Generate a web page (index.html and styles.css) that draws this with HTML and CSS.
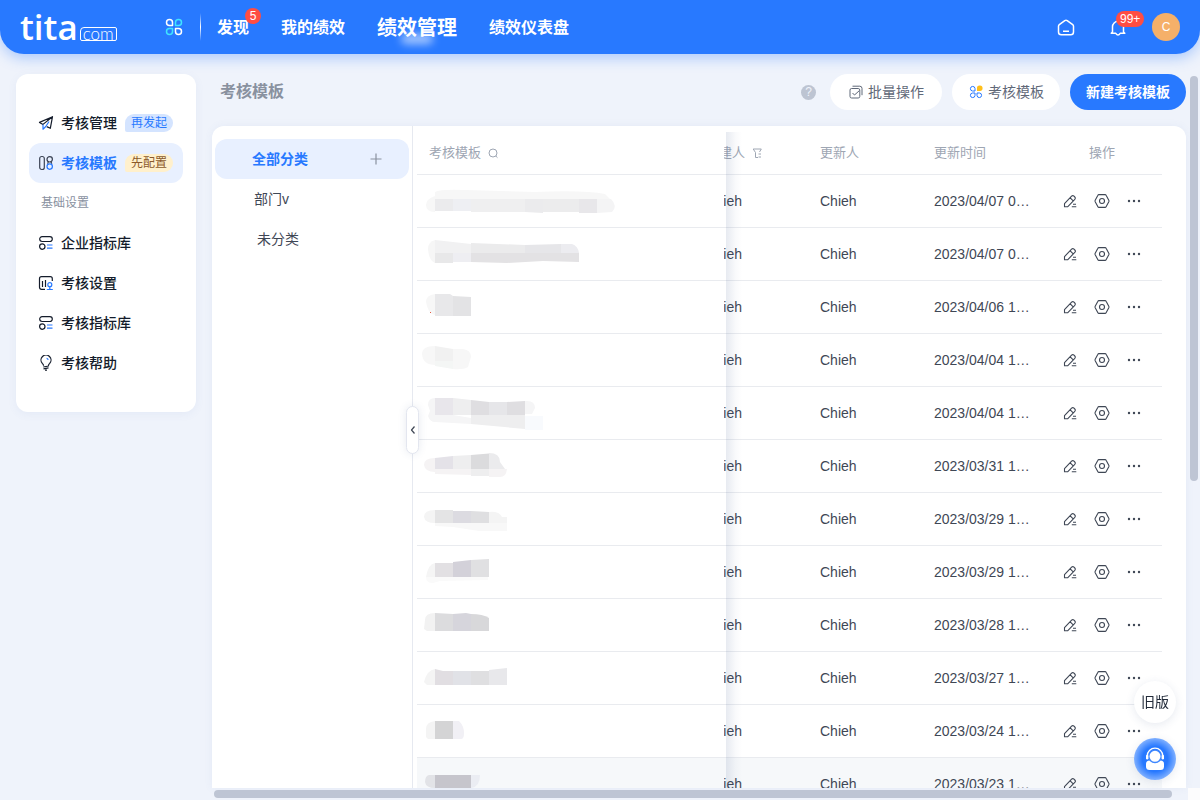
FILE: index.html
```html
<!DOCTYPE html>
<html lang="zh-CN">
<head>
<meta charset="utf-8">
<title>考核模板</title>
<link rel="stylesheet" href="styles.css">
</head>
<body>
<svg class="sprite" aria-hidden="true">
  <symbol id="edit" viewBox="0 0 16 16"><path d="M2.500 13.800v-3.200L9.600 3.200a1.700 1.700 0 0 1 2.400 0l.8.8a1.700 1.700 0 0 1 0 2.400L5.600 13.800zM8.200 4.800l3 3M9.800 13.800h4.500M11 11.200h3"/></symbol>
  <symbol id="view" viewBox="0 0 16 16"><path d="M4.900 1.600h6.200q.7 0 1 .6l2.700 5q.4.800 0 1.600l-2.700 5q-.3.600-1 .6H4.900q-.7 0-1-.6l-2.700-5q-.4-.8 0-1.600l2.700-5q.3-.6 1-.6z"/><circle cx="8" cy="8" r="2.500"/></symbol>
  <symbol id="more" viewBox="0 0 16 16"><g class="dots"><circle cx="3" cy="8" r="1.200"/><circle cx="8" cy="8" r="1.200"/><circle cx="13" cy="8" r="1.200"/></g></symbol>
  <symbol id="library" viewBox="0 0 16 16"><rect x="1.700" y="1.700" width="12.600" height="4.800" rx="2.400"/><circle cx="4.300" cy="11.600" r="2.700"/><path class="blue" d="M9 10h5.500M9 13.200h5.500"/></symbol>
</svg>

<header class="header">
  <a class="logo" href="#"><span class="logo-name">tita</span><span class="logo-com">com</span></a>
  <button class="icon-button apps" aria-label="应用">
    <svg viewBox="0 0 18 18"><path d="M7.500 7.500H4.500A3 3 0 1 1 7.500 4.500zM10.500 10.500h3a3 3 0 1 1-3 3z"/><path class="cyan" d="M10.500 7.500V4.500A3 3 0 1 1 13.500 7.500zM7.500 10.500v3A3 3 0 1 1 4.500 10.500z"/></svg>
  </button>
  <span class="divider"></span>
  <nav class="nav">
    <a href="#">发现<span class="badge">5</span></a>
    <a href="#">我的绩效</a>
    <a class="current" href="#">绩效管理</a>
    <a href="#">绩效仪表盘</a>
  </nav>
  <div class="account">
    <button class="icon-button" aria-label="首页"><svg viewBox="0 0 18 18"><path d="M1.500 8.200Q1.500 7.300 2.300 6.700L7.800 2.600Q9 1.900 10.200 2.600L15.700 6.700Q16.500 7.300 16.500 8.200V14Q16.500 16.800 13.700 16.800H4.300Q1.500 16.800 1.500 14zM6 13.200h6"/></svg></button>
    <button class="icon-button" aria-label="通知"><svg viewBox="0 0 18 18"><path d="M3.500 14V8.800a5.500 5.500 0 0 1 11 0V14l1.300 1.300H11.200Q9 18.600 6.800 15.300H2.200z"/></svg><span class="badge">99+</span></button>
    <button class="avatar">C</button>
  </div>
</header>

<div class="body">
  <aside class="sidebar">
    <a class="side-item" href="#"><svg viewBox="0 0 16 16"><path d="M14.500 1.700 1.500 7.400l3.500 2zM14.500 1.700l-2.200 11.600-3.600-1.700"/><path class="blue" d="M5 9.400v4.800l2.800-2.700M7.800 11.500 11 6.500"/></svg>考核管理<span class="tag tag-blue">再发起</span></a>
    <a class="side-item active" href="#"><svg viewBox="0 0 16 16"><rect x="1.700" y="1.500" width="4.600" height="13" rx="2"/><circle cx="11.700" cy="4.300" r="2.700"/><path d="M9.600 8.700 10.300 7M13.800 8.700 13.100 7"/><circle class="blue" cx="11.700" cy="11.600" r="2.700"/></svg>考核模板<span class="tag tag-gold">先配置</span></a>
    <h2 class="side-title">基础设置</h2>
    <a class="side-item" href="#"><svg><use href="#library"/></svg>企业指标库</a>
    <a class="side-item" href="#"><svg viewBox="0 0 16 16"><path d="M7 14.300H3.500q-2 0-2-2v-8.600q0-2 2-2h8.800q2 0 2 2V6M4.500 6v6M7.500 5v7"/><path class="blue" d="M8.800 14.500h6M11.800 11.500v3"/><circle class="blue" cx="11.800" cy="9.700" r="2"/></svg>考核设置</a>
    <a class="side-item" href="#"><svg><use href="#library"/></svg>考核指标库</a>
    <a class="side-item" href="#"><svg viewBox="0 0 16 16"><path d="M5.600 10.800Q5.500 9.500 4.300 8.400a5 5 0 1 1 7.400 0Q10.500 9.500 10.400 10.800M5.300 12l5.500-1M5.500 13.800l5-.9M7 15.200h2"/><path class="blue" d="M8.600 3.300q1.300.2 1.600 1.600"/></svg>考核帮助</a>
  </aside>

  <main class="content">
    <div class="toolbar">
      <h1>考核模板</h1>
      <button class="help" aria-label="帮助">?</button>
      <button class="pill"><svg viewBox="0 0 16 16"><path d="M4.500 2.200h7.300q2.200 0 2.200 2.200v6.800M3.600 4.500h6.600q1.600 0 1.600 1.600v6.300q0 1.600-1.600 1.600H3.600Q2 14 2 12.400V6.100q0-1.600 1.600-1.600zM4.500 9l2 2 5-4.500"/></svg>批量操作</button>
      <button class="pill"><svg viewBox="0 0 16 16"><path class="blue" d="M7 7H4.500A2.300 2.300 0 1 1 7 4.500zM9 9h2.500A2.300 2.300 0 1 1 9 11.500zM7 9v2.500A2.300 2.300 0 1 1 4.500 9z"/><path class="gold" d="M9 7V4.500A2.800 2.800 0 1 1 11.500 7z"/></svg>考核模板</button>
      <button class="pill primary">新建考核模板</button>
    </div>

    <section class="panel">
      <div class="categories">
        <div class="category selected"><span>全部分类</span><button class="add" aria-label="新增分类"><svg viewBox="0 0 16 16"><path d="M8 2.500v11M2.500 8h11"/></svg></button></div>
        <div class="category">部门v</div>
        <div class="category nested">未分类</div>
        <button class="collapse" aria-label="收起"><svg viewBox="0 0 8 10"><path d="M5.500 1.500 2.500 5l3 3.500"/></svg></button>
      </div>
      <div class="table-wrap">
        <table>
          <thead>
            <tr>
              <th class="name"><span class="head">考核模板<svg viewBox="0 0 12 12"><circle cx="6" cy="6" r="4"/><path d="m8.800 9 1.700 1.700"/></svg></span></th>
              <th class="creator"><span class="head clip">创建人<svg viewBox="0 0 12 12"><path d="M8.500 5 10.300 2H2.200L4.500 5.500v5h2.500M7.500 7h2.500M7.500 10h2.500"/></svg></span></th>
              <th class="updater">更新人</th>
              <th class="time">更新时间</th>
              <th class="ops">操作</th>
            </tr>
          </thead>
          <tbody>
            <tr>
              <td><svg class="mosaic" viewBox="417 175 220 52"><path fill="#f7f7f7" d="M435 192q5-3 30-2l70 2q50-2 70 2l5 5H435zM435 196q-9 3-9 9 0 7 9 7z"/><path fill="#ebebed" d="M435 199h18v12h-18zM525 199h18v14l-18-1z"/><path fill="#eeeff3" d="M453 199h18v12h-18z"/><path fill="#efeff0" d="M471 199h54v13h-54z"/><path fill="#ececed" d="M543 199h36v13h-36z"/><path fill="#e8e7ea" d="M579 199h18v14h-18z"/><path fill="#f4f4f5" d="M597 199h14q7 7 1 13l-15 1z"/></svg></td>
              <td><span class="clip">Chieh</span></td><td>Chieh</td><td>2023/04/07 0…</td>
              <td class="actions"><button aria-label="编辑"><svg><use href="#edit"/></svg></button><button aria-label="查看"><svg><use href="#view"/></svg></button><button aria-label="更多"><svg><use href="#more"/></svg></button></td>
            </tr>
            <tr>
              <td><svg class="mosaic" viewBox="417 228 220 52"><path fill="#f6f6f6" d="M435 240q-7 2-7 9 1 12 7 14z"/><path fill="#f1f1f2" d="M435 240l18 2v11h-18zM453 242l18 2v9h-18z"/><path fill="#ebebec" d="M471 243l54 2v8h-54z"/><path fill="#e6e6e9" d="M525 245l36-1v9h-36z"/><path fill="#ececf0" d="M561 244h11q6 2 7 9h-18z"/><path fill="#e8e8e9" d="M435 253h18v10h-18z"/><path fill="#eeeef2" d="M453 253h18v9h-18z"/><path fill="#e3e2e4" d="M471 253h108v9l-36-1-36 2-36-1z"/></svg></td>
              <td><span class="clip">Chieh</span></td><td>Chieh</td><td>2023/04/07 0…</td>
              <td class="actions"><button aria-label="编辑"><svg><use href="#edit"/></svg></button><button aria-label="查看"><svg><use href="#view"/></svg></button><button aria-label="更多"><svg><use href="#more"/></svg></button></td>
            </tr>
            <tr>
              <td><svg class="mosaic" viewBox="417 281 220 52"><path fill="#f7f7f7" d="M435 294q-9 1-9 8 2 12 9 13z"/><path fill="#e8e8ea" d="M435 294h15l3 2v20h-18z"/><path fill="#e3e3e5" d="M453 296l18 1v19h-18z"/><path fill="#e55b43" d="M430 312h1v1h-1z"/></svg></td>
              <td><span class="clip">Chieh</span></td><td>Chieh</td><td>2023/04/06 1…</td>
              <td class="actions"><button aria-label="编辑"><svg><use href="#edit"/></svg></button><button aria-label="查看"><svg><use href="#view"/></svg></button><button aria-label="更多"><svg><use href="#more"/></svg></button></td>
            </tr>
            <tr>
              <td><svg class="mosaic" viewBox="417 334 220 52"><path fill="#f7f7f7" d="M435 346q-13 0-13 8 1 11 13 11zM453 349h10q8 1 8 8l-3 10q-5 3-15 2z"/><path fill="#f1f1f1" d="M435 346l18 3v12h-18z"/><path fill="#f4f6f5" d="M435 361h18v8l-18-3z"/></svg></td>
              <td><span class="clip">Chieh</span></td><td>Chieh</td><td>2023/04/04 1…</td>
              <td class="actions"><button aria-label="编辑"><svg><use href="#edit"/></svg></button><button aria-label="查看"><svg><use href="#view"/></svg></button><button aria-label="更多"><svg><use href="#more"/></svg></button></td>
            </tr>
            <tr>
              <td><svg class="mosaic" viewBox="417 387 220 52"><path fill="#f5f5f6" d="M435 398q-7 0-7 7l2 6-2 5q2 6 7 6zM525 401q10-1 10 7l-3 6h-7zM435 415h18l18 3v6l-36-2z"/><path fill="#e8e6eb" d="M435 398h18v17h-18z"/><path fill="#eeeeef" d="M453 398l18 2v15h-18zM471 415h54v14l-54-5z"/><path fill="#dfdee1" d="M471 400l18 2v13h-18zM507 402l18-1v14h-18z"/><path fill="#e6e6e9" d="M489 402h18v13h-18z"/><path fill="#f8fafd" d="M525 416h18v14h-18z"/></svg></td>
              <td><span class="clip">Chieh</span></td><td>Chieh</td><td>2023/04/04 1…</td>
              <td class="actions"><button aria-label="编辑"><svg><use href="#edit"/></svg></button><button aria-label="查看"><svg><use href="#view"/></svg></button><button aria-label="更多"><svg><use href="#more"/></svg></button></td>
            </tr>
            <tr>
              <td><svg class="mosaic" viewBox="417 440 220 52"><path fill="#f5f3f4" d="M435 458q-11 0-11 7 1 7 11 7zM435 469h36v6l-36-1zM489 469h18q-1 8-7 8h-11z"/><path fill="#e4e2e8" d="M435 458l18-2v13h-18z"/><path fill="#eeeeef" d="M453 456l18-1v14h-18zM471 469h18v7h-18z"/><path fill="#dbdbdd" d="M471 455l18-1.500V469h-18z"/><path fill="#ebebed" d="M489 453q11 0 11 9l5 7h-16z"/></svg></td>
              <td><span class="clip">Chieh</span></td><td>Chieh</td><td>2023/03/31 1…</td>
              <td class="actions"><button aria-label="编辑"><svg><use href="#edit"/></svg></button><button aria-label="查看"><svg><use href="#view"/></svg></button><button aria-label="更多"><svg><use href="#more"/></svg></button></td>
            </tr>
            <tr>
              <td><svg class="mosaic" viewBox="417 493 220 52"><path fill="#f4f4f4" d="M435 510q-11 0-11 7 1 6 11 6zM489 512q10-1 13 5h5v6h-18z"/><path fill="#e4e4e5" d="M435 510h18v13h-18z"/><path fill="#dcdbe1" d="M453 511h18v12h-18z"/><path fill="#dfdfe1" d="M471 511l18 1v11h-18z"/><path fill="#f8f8f8" d="M435 523h72v8h-28l-26-4-18-1z"/></svg></td>
              <td><span class="clip">Chieh</span></td><td>Chieh</td><td>2023/03/29 1…</td>
              <td class="actions"><button aria-label="编辑"><svg><use href="#edit"/></svg></button><button aria-label="查看"><svg><use href="#view"/></svg></button><button aria-label="更多"><svg><use href="#more"/></svg></button></td>
            </tr>
            <tr>
              <td><svg class="mosaic" viewBox="417 546 220 52"><path fill="#f5f5f5" d="M435 563q-7 1-9 14h9z"/><path fill="#e2e0e3" d="M435 563h18v14h-18z"/><path fill="#d3d1d9" d="M453 562l18-2v17h-18z"/><path fill="#e0e0e2" d="M471 560l18-1v18h-18z"/><path fill="#fafafa" d="M426 577h62v3l-48 1-7 2q-7 0-7-6z"/></svg></td>
              <td><span class="clip">Chieh</span></td><td>Chieh</td><td>2023/03/29 1…</td>
              <td class="actions"><button aria-label="编辑"><svg><use href="#edit"/></svg></button><button aria-label="查看"><svg><use href="#view"/></svg></button><button aria-label="更多"><svg><use href="#more"/></svg></button></td>
            </tr>
            <tr>
              <td><svg class="mosaic" viewBox="417 599 220 52"><path fill="#f2f2f2" d="M435 613q-10 0-10 7l-1 9 3 2h8z"/><path fill="#dcdcde" d="M435 613l18 1v17h-18z"/><path fill="#d6d5dc" d="M453 614l13-1 5 1v17h-18z"/><path fill="#d8d8da" d="M471 614q12 0 18 4v13h-18z"/></svg></td>
              <td><span class="clip">Chieh</span></td><td>Chieh</td><td>2023/03/28 1…</td>
              <td class="actions"><button aria-label="编辑"><svg><use href="#edit"/></svg></button><button aria-label="查看"><svg><use href="#view"/></svg></button><button aria-label="更多"><svg><use href="#more"/></svg></button></td>
            </tr>
            <tr>
              <td><svg class="mosaic" viewBox="417 652 220 52"><path fill="#f4f4f4" d="M435 669q-8 1-11 13l3 3h8z"/><path fill="#e1dee2" d="M435 669l8 2h10v14h-18z"/><path fill="#e1e2e7" d="M453 671h18v14h-18z"/><path fill="#dfdfe1" d="M471 671h18v14h-18z"/><path fill="#e8e8eb" d="M489 670l18-2v17h-18z"/></svg></td>
              <td><span class="clip">Chieh</span></td><td>Chieh</td><td>2023/03/27 1…</td>
              <td class="actions"><button aria-label="编辑"><svg><use href="#edit"/></svg></button><button aria-label="查看"><svg><use href="#view"/></svg></button><button aria-label="更多"><svg><use href="#more"/></svg></button></td>
            </tr>
            <tr>
              <td><svg class="mosaic" viewBox="417 705 220 52"><path fill="#f4f4f4" d="M435 721q-9 1-9 8v8l2 2h7z"/><path fill="#d4d4d5" d="M435 721h18v18h-18z"/><path fill="#f1f0f5" d="M453 721h6q5 5 5 12 0 6-3 6h-8z"/></svg></td>
              <td><span class="clip">Chieh</span></td><td>Chieh</td><td>2023/03/24 1…</td>
              <td class="actions"><button aria-label="编辑"><svg><use href="#edit"/></svg></button><button aria-label="查看"><svg><use href="#view"/></svg></button><button aria-label="更多"><svg><use href="#more"/></svg></button></td>
            </tr>
            <tr class="hover">
              <td><svg class="mosaic" viewBox="417 758 220 52"><path fill="#e2e3e7" d="M435 775h-6q-4 1-4 7 1 6 10 6z"/><path fill="#c6c5cc" d="M435 775h36v14h-20l-16-1z"/><path fill="#ebedf3" d="M471 775h9q0 12-9 13z"/></svg></td>
              <td><span class="clip">Chieh</span></td><td>Chieh</td><td>2023/03/23 1…</td>
              <td class="actions"><button aria-label="编辑"><svg><use href="#edit"/></svg></button><button aria-label="查看"><svg><use href="#view"/></svg></button><button aria-label="更多"><svg><use href="#more"/></svg></button></td>
            </tr>
          </tbody>
        </table>
      </div>
    </section>
    <div class="track-x"><div class="thumb"></div></div>
  </main>
  <div class="track-y"><div class="thumb"></div><div class="corner"></div></div>
</div>

<div class="floating">
  <button class="old">旧版</button>
  <button class="support" aria-label="客服"><svg viewBox="0 0 28 28"><rect x="5" y="15.500" width="18" height="9.500" rx="3.500" fill="#fff"/><circle cx="14" cy="11.300" r="6.200" fill="#fff" stroke="#3d86ff" stroke-width="1.400"/><path d="M6.200 11a7.800 7.800 0 0 1 15.600 0" fill="none" stroke="#fff" stroke-width="1.300"/><rect x="5" y="9.800" width="2.400" height="4.700" rx="1.200" fill="#fff"/><rect x="20.600" y="9.800" width="2.400" height="4.700" rx="1.200" fill="#fff"/></svg></button>
</div>
</body>
</html>
```
FILE: styles.css
```css
* { box-sizing: border-box; }
body {
  margin: 0;
  height: 100vh;
  display: flex;
  flex-direction: column;
  overflow: hidden;
  background: #eff3fb;
  color: #3f4755;
  font: 14px/20px "Liberation Sans", "Noto Sans CJK SC", sans-serif;
}
button {
  border: 0;
  padding: 0;
  background: none;
  color: inherit;
  font: inherit;
}
a { color: inherit; text-decoration: none; }
h1, h2 { margin: 0; }
svg {
  display: block;
  flex: none;
  width: 16px;
  height: 16px;
  fill: none;
  stroke: currentColor;
  stroke-width: 1.2;
  stroke-linejoin: round;
}
.sprite { position: absolute; width: 0; height: 0; }
.blue { stroke: #2879ff; }
.cyan { stroke: #3fe4ff; }
.gold { fill: #ffbf1a; stroke: none; }
.dots { fill: currentColor; stroke: none; }

.header {
  flex: none;
  height: 54px;
  display: flex;
  align-items: center;
  padding: 0 20px;
  border-radius: 0 0 24px 24px;
  background: #2879ff;
  box-shadow: 0 4px 14px rgba(40, 121, 255, .35);
  color: #fff;
}
.logo { display: flex; align-items: baseline; gap: 2px; width: 97px; }
.logo-name { font: 600 35px/40px "Open Sans", sans-serif; }
.logo-com {
  padding: 0 2px;
  border: 1px solid #fff;
  border-radius: 4px 2px 2px 2px;
  font: 300 17px/12px Lato, sans-serif;
}
.icon-button { position: relative; }
.icon-button svg { width: 18px; height: 18px; stroke-width: 1.5; }
.apps { margin-left: 48px; }
.divider {
  width: 1px;
  height: 28px;
  margin: 0 16px 0 17px;
  background: linear-gradient(transparent, #fff, transparent);
}
.nav { display: flex; align-items: center; gap: 32px; padding-top: 2px; font-size: 16px; line-height: 24px; font-weight: 700; }
.nav a { position: relative; }
.nav .current { font-size: 20px; }
.nav .current::after {
  content: "";
  position: absolute;
  left: 24px;
  bottom: -4px;
  width: 32px;
  height: 10px;
  border-radius: 5px;
  background: rgba(255, 255, 255, .6);
  filter: blur(4px);
}
.badge {
  position: absolute;
  top: -8px;
  left: 28px;
  min-width: 16px;
  height: 16px;
  padding: 0 4px;
  border-radius: 8px;
  background: #ff4d43;
  color: #fff;
  font-size: 12px;
  line-height: 16px;
  font-weight: 400;
  text-align: center;
}
.account { display: flex; align-items: center; gap: 34px; margin-left: auto; }
.account .badge { top: -7px; left: 7px; }
.avatar {
  width: 28px;
  height: 28px;
  margin-left: -9px;
  border-radius: 50%;
  background: #f5b069;
  font-size: 12px;
}

.body { flex: 1; min-height: 0; display: flex; }
.sidebar {
  flex: none;
  align-self: flex-start;
  width: 180px;
  margin: 20px 16px;
  padding: 29px 13px;
  border-radius: 12px;
  background: #fff;
  box-shadow: 0 2px 10px rgba(80, 120, 190, .07);
}
.side-item {
  height: 40px;
  display: flex;
  align-items: center;
  gap: 8px;
  padding-left: 9px;
  border-radius: 12px;
  color: #141c2b;
  font-weight: 500;
}
.side-item svg { margin-right: -1px; }
.side-item.active { background: #e8f0ff; color: #2879ff; font-weight: 700; }
.side-item.active svg { color: #3a4254; }
.side-title { padding-left: 12px; color: #89919f; font-size: 12px; line-height: 40px; font-weight: 400; }
.tag {
  padding: 0 6px;
  border-radius: 9px 9px 9px 2px;
  font-size: 12px;
  line-height: 18px;
  font-weight: 400;
}
.tag-blue { background: #d4e4ff; color: #2879ff; }
.tag-gold { background: #fff0cc; color: #8b5a2b; }

.content { flex: 1; min-width: 0; display: flex; flex-direction: column; padding-top: 20px; }
.toolbar { display: flex; align-items: center; gap: 10px; margin-bottom: 16px; }
.toolbar h1 { margin: 0 auto 0 8px; color: #89919f; font-size: 16px; line-height: 24px; }
.help {
  width: 15px;
  height: 15px;
  margin-right: 4px;
  border-radius: 50%;
  background: #bdc4d2;
  color: #eff3fb;
  font-size: 12px;
  line-height: 15px;
}
.pill {
  height: 36px;
  display: flex;
  align-items: center;
  gap: 4px;
  padding: 0 18px;
  border-radius: 18px;
  background: #fff;
  color: #5f6878;
}
.pill + .pill { padding: 0 16px; }
.pill svg { stroke-width: 1; }
.pill.primary { background: #2879ff; color: #fff; font-weight: 700; }

.panel {
  flex: 1;
  min-height: 0;
  display: flex;
  overflow: hidden;
  border-radius: 12px 12px 0 0;
  background: #fff;
  box-shadow: 0 0 8px rgba(80, 120, 190, .07);
}
.categories {
  position: relative;
  flex: none;
  width: 201px;
  padding: 13px 3px 0;
  border-right: 1px solid #e6e9f0;
}
.category {
  height: 40px;
  display: flex;
  align-items: center;
  justify-content: space-between;
  padding: 0 25px 0 39px;
  border-radius: 12px;
}
.category.nested { padding-left: 42px; }
.category.selected { padding-left: 37px; background: #e8f0ff; color: #2879ff; font-weight: 700; }
.add { color: #89919f; }
.collapse {
  position: absolute;
  z-index: 2;
  top: 280px;
  right: -7px;
  width: 13px;
  height: 48px;
  display: flex;
  align-items: center;
  justify-content: center;
  border: 1px solid #e3e6ef;
  border-radius: 7px;
  background: #fff;
  box-shadow: 0 0 8px rgba(60, 80, 130, .12);
}
.collapse svg { width: 8px; height: 10px; }

.table-wrap { position: relative; flex: 1; min-width: 0; padding: 0 24px 0 4px; }
.table-wrap::after {
  content: "";
  position: absolute;
  top: 6px;
  right: 444px;
  bottom: 0;
  width: 16px;
  background: linear-gradient(90deg, rgba(70, 95, 145, .13), rgba(70, 95, 145, .03) 60%, transparent);
  pointer-events: none;
}
table { width: 100%; table-layout: fixed; border-collapse: separate; border-spacing: 0; }
th {
  height: 49px;
  padding: 6px 0 0 10px;
  border-bottom: 1px solid #e9ebef;
  color: #9ea6b3;
  font-size: 13px;
  font-weight: 400;
  text-align: left;
}
td { height: 53px; padding: 0 0 0 10px; border-bottom: 1px solid #e9ebef; white-space: nowrap; }
.hover td { background: #f6f8fa; }
.head { display: flex; align-items: center; gap: 6px; }
.head svg { width: 12px; height: 12px; stroke-width: 1; }
th.name { padding-left: 12px; }
th.creator { width: 86px; }
th.updater { width: 114px; }
th.time { width: 118px; }
th.ops { width: 120px; padding-left: 0; text-align: center; }
td:first-child, th.creator, td:nth-child(2) { padding-left: 0; }
.clip { display: flex; justify-content: flex-end; width: 18px; overflow: hidden; white-space: nowrap; }
.head.clip { width: 39px; }
td.actions { padding-left: 0; font-size: 0; line-height: 0; text-align: center; }
.actions button { display: inline-block; width: 16px; margin: 0 8px; vertical-align: middle; }
.actions svg { stroke-width: 1.1; }
.mosaic { width: 220px; height: 52px; stroke: none; }

.track-x { flex: none; height: 12px; padding: 2px 14px 2px 2px; }
.track-y { flex: none; width: 14px; display: flex; flex-direction: column; justify-content: space-between; padding: 22px 0 0 2px; }
.thumb { height: 8px; border-radius: 4px; background: #bec5d4; }
.track-y .thumb { height: 56%; margin: 0 2px; }
.corner { height: 12px; background: #fcfcfd; }

.floating { position: fixed; z-index: 3; right: 24px; bottom: 20px; display: grid; gap: 15px; }
.floating button { width: 42px; height: 42px; border-radius: 50%; box-shadow: 0 2px 10px rgba(60, 80, 130, .12); }
.old { background: #fff; color: #222b3a; }
.support { display: grid; place-items: center; background: radial-gradient(circle closest-side, #2879ff 60%, #80b0ff); }
.support svg { width: 28px; height: 28px; stroke: none; }
```
